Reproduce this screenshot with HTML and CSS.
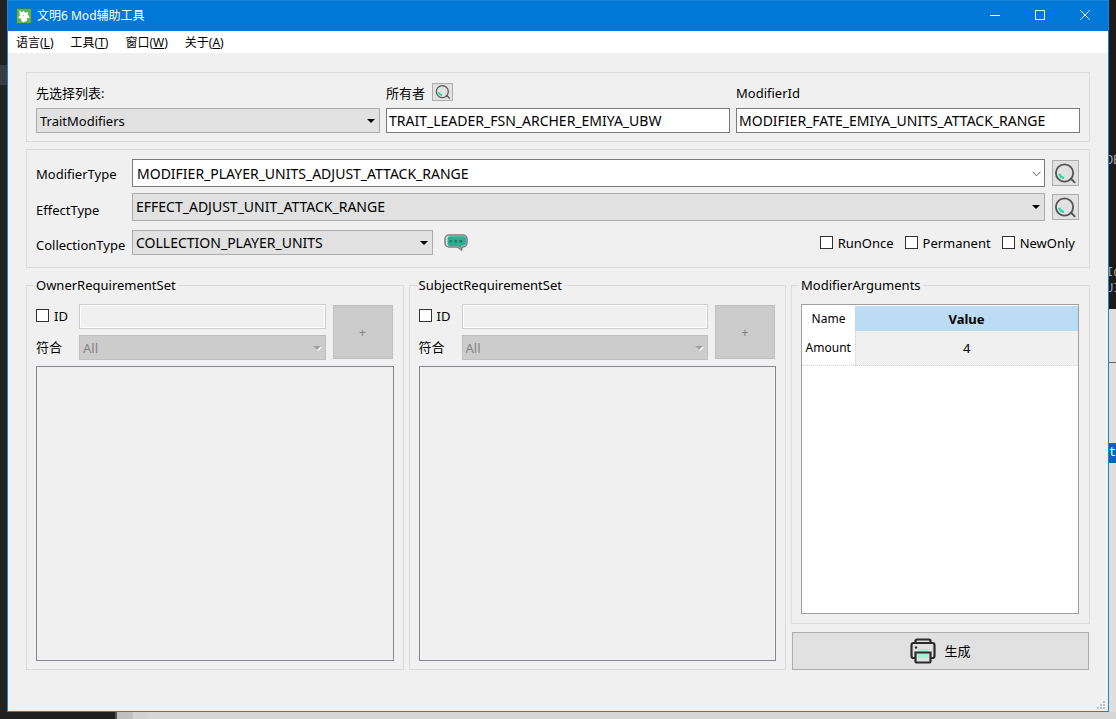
FILE: index.html
```
<!DOCTYPE html>
<html lang="zh-CN">
<head>
<meta charset="utf-8">
<title>文明6 Mod辅助工具</title>
<link rel="stylesheet" href="styles.css">
</head>
<body>
<svg class="defs" width="0" height="0" aria-hidden="true">
  <symbol id="search" viewBox="0 0 24 24">
    <circle cx="11" cy="11.500" r="9" fill="none" stroke="#555" stroke-width="1.900"/>
    <path d="M16.500 18.500l1.500-1 4 4.300" stroke="#555" stroke-width="2" fill="none"/>
    <path d="M5.500 12.300a5.600 5.600 0 0 0 5 4.300" stroke="#1fdca5" stroke-width="2.300" fill="none"/>
  </symbol>
</svg>
<div class="desktop">
  <div class="edge-left"></div>
  <div class="window">
    <header class="titlebar">
      <svg class="app-icon" viewBox="0 0 16 16" aria-hidden="true">
        <rect x=".5" y=".5" width="15" height="15" rx="1" fill="#59b365" stroke="#2b7d6c"/>
        <path d="M3.500 2l2.500 2.500 1.500-2 1.500 2.300 3-.8-.2 2.500 2 3.200-3 .5.300 2.300-3.600 1.800-2.300-1 .3-2L2 9.500l1.800-1.800z" fill="#fff"/>
        <path d="M6.500 7l1.500 1" stroke="#8ac994" fill="none"/>
      </svg>
      <h1 class="title">文明6 Mod辅助工具</h1>
      <div class="controls">
        <button class="control" aria-label="最小化"><svg viewBox="0 0 10 10"><path d="M0 5.500h10"/></svg></button>
        <button class="control" aria-label="最大化"><svg viewBox="0 0 10 10"><path d="M.5.500h9v9h-9z"/></svg></button>
        <button class="control" aria-label="关闭"><svg viewBox="0 0 10 10"><path d="M.3.300l9.400 9.400M9.700.300L.3 9.700"/></svg></button>
      </div>
    </header>
    <nav class="menu">
      <button class="menu-item">语言(<u>L</u>)</button>
      <button class="menu-item">工具(<u>T</u>)</button>
      <button class="menu-item">窗口(<u>W</u>)</button>
      <button class="menu-item">关于(<u>A</u>)</button>
    </nav>
    <main class="content">
      <section class="panel source">
        <div class="field">
          <div class="field-head"><label for="list">先选择列表:</label></div>
          <span class="combo"><select id="list"><option>TraitModifiers</option></select></span>
        </div>
        <div class="field">
          <div class="field-head"><label for="owner">所有者</label>
            <button class="tool small" aria-label="搜索所有者"><svg><use href="#search"/></svg></button></div>
          <input class="text code-name" id="owner" value="TRAIT_LEADER_FSN_ARCHER_EMIYA_UBW">
        </div>
        <div class="field">
          <div class="field-head"><label for="modifier-id">ModifierId</label></div>
          <input class="text code-name" id="modifier-id" value="MODIFIER_FATE_EMIYA_UNITS_ATTACK_RANGE">
        </div>
      </section>

      <section class="panel types">
        <div class="type-row">
          <label for="modifier-type">ModifierType</label>
          <span class="combo editable"><input class="text code-name" id="modifier-type" value="MODIFIER_PLAYER_UNITS_ADJUST_ATTACK_RANGE"><svg class="chevron" viewBox="0 0 9 6" aria-hidden="true"><path d="M.5.800l4 4 4-4"/></svg></span>
          <button class="tool" aria-label="搜索 ModifierType"><svg><use href="#search"/></svg></button>
        </div>
        <div class="type-row">
          <label for="effect-type">EffectType</label>
          <span class="combo"><select class="code-name" id="effect-type"><option>EFFECT_ADJUST_UNIT_ATTACK_RANGE</option></select></span>
          <button class="tool" aria-label="搜索 EffectType"><svg><use href="#search"/></svg></button>
        </div>
        <div class="type-row collection">
          <label for="collection-type">CollectionType</label>
          <span class="combo"><select class="code-name" id="collection-type"><option>COLLECTION_PLAYER_UNITS</option></select></span>
          <button class="comment" aria-label="注释"><svg viewBox="0 0 24 17">
            <path d="M5 1h14a4 4 0 0 1 4 4v4a4 4 0 0 1-4 4h-1l-.5 3-4-3H5a4 4 0 0 1-4-4V5a4 4 0 0 1 4-4z" fill="#d8e8e4" stroke="#7b7b7b" stroke-width="1.500"/>
            <path d="M6 2.300h13.500a2.500 2.500 0 0 1 2.500 2.500v4a3 3 0 0 1-3 3h-2v2.500L13.500 12H6a2.500 2.500 0 0 1-2.500-2.500V5A2.600 2.600 0 0 1 6 2.300z" fill="#26b094"/>
            <path d="M5.500 6h2.500v2.500H5.500zM10.500 6H13v2.500h-2.500zM15.500 6H18v2.500h-2.500z" fill="#4e6460"/>
          </svg></button>
          <div class="flags">
            <label class="check"><input type="checkbox">RunOnce</label>
            <label class="check"><input type="checkbox">Permanent</label>
            <label class="check"><input type="checkbox">NewOnly</label>
          </div>
        </div>
      </section>

      <div class="groups">
        <fieldset class="group">
          <legend>OwnerRequirementSet</legend>
          <div class="group-body">
            <div class="requirement">
              <label class="check"><input type="checkbox">ID</label>
              <input class="text" aria-label="Owner ID" disabled>
              <label for="owner-match">符合</label>
              <span class="combo off"><select id="owner-match" disabled><option>All</option></select></span>
              <button class="add" disabled>+</button>
            </div>
            <div class="tree"></div>
          </div>
        </fieldset>
        <fieldset class="group">
          <legend>SubjectRequirementSet</legend>
          <div class="group-body">
            <div class="requirement">
              <label class="check"><input type="checkbox">ID</label>
              <input class="text" aria-label="Subject ID" disabled>
              <label for="subject-match">符合</label>
              <span class="combo off"><select id="subject-match" disabled><option>All</option></select></span>
              <button class="add" disabled>+</button>
            </div>
            <div class="tree"></div>
          </div>
        </fieldset>
        <div class="side">
          <fieldset class="group">
            <legend>ModifierArguments</legend>
            <div class="group-body">
              <div class="table-box">
                <table class="arguments">
                  <thead><tr><th class="name">Name</th><th class="value">Value</th></tr></thead>
                  <tbody><tr><td class="name">Amount</td><td class="value">4</td></tr></tbody>
                </table>
              </div>
            </div>
          </fieldset>
          <button class="generate">
            <svg viewBox="0 0 26 26" aria-hidden="true">
              <path d="M8 11h10v9H8z" fill="#a8efd2"/>
              <path d="M5.500 20H3.500A2 2 0 0 1 1.500 18V7a2 2 0 0 1 2-2h19a2 2 0 0 1 2 2v11a2 2 0 0 1-2 2h-2M5.500 5V3a1.500 1.500 0 0 1 1.500-1.500h12A1.500 1.500 0 0 1 20.500 3v2M5.500 14.500h15V23a1.500 1.500 0 0 1-1.500 1.500H7A1.500 1.500 0 0 1 5.500 23z" fill="none" stroke="#2b2b2b" stroke-width="2.200"/>
              <circle cx="6" cy="9.500" r="1.200" fill="#2b2b2b"/>
            </svg>生成
          </button>
        </div>
      </div>
    </main>
    <svg class="grip" viewBox="0 0 8 8" aria-hidden="true"><path d="M6 0h2v2H6zM3 3h2v2H3zM6 3h2v2H6zM0 6h2v2H0zM3 6h2v2H3zM6 6h2v2H6z" fill="#bdbdbd"/></svg>
  </div>
  <div class="edge-right">
    <div class="code"><span>DE</span><span>Id</span><span>UI</span></div>
    <div class="pale"><span class="selection">t</span></div>
  </div>
  <div class="edge-bottom"></div>
</div>
</body>
</html>
```
FILE: styles.css
```
* { box-sizing: border-box; }

body {
  margin: 0;
  font: 13px/20px "Noto Sans", "Noto Sans CJK SC", sans-serif;
  color: #000;
}

button, input, select { margin: 0; font: inherit; color: inherit; border-radius: 0; }
.defs { position: absolute; }

.desktop {
  display: grid;
  grid-template-columns: 7px minmax(0, 1fr) 7px;
  grid-template-rows: minmax(0, 1fr) 7px;
  min-height: 100vh;
  background: #222;
}
.edge-left { background: linear-gradient(#222 65px, #3b3b42 65px 85px, #222 85px); }
.edge-bottom {
  grid-column: 1 / -1;
  background: linear-gradient(90deg, #202020 115px, #555 115px 117px, #c0c0c0 117px 133px, #d2d2d2 133px 147px, #d6d6d6 147px);
}
.edge-right {
  display: flex;
  flex-direction: column;
  overflow: hidden;
  font: 12px/16px "Liberation Mono", monospace;
  color: #aaa;
}
.code {
  display: grid;
  grid-template-rows: 112px 16px;
  align-content: start;
  height: 309px;
  padding-top: 153px;
  background: #1b1b1b;
}
.code span { margin-left: -3px; }
.pale {
  flex: 1;
  padding-top: 134px;
  background: linear-gradient(#dedede 53px, #666 53px 54px, #dedede 54px);
}
.selection { display: block; line-height: 20px; background: #0067c0; color: #fff; }

.window {
  position: relative;
  display: flex;
  flex-direction: column;
  border: 1px solid #1883d7;
  border-top: 0;
  background: #f0f0f0;
}

.titlebar {
  display: flex;
  align-items: center;
  height: 31px;
  padding-left: 8px;
  border-top: 1px solid #1883d7;
  background: #0078d7;
  color: #fff;
}
.app-icon { width: 16px; height: 16px; }
.title { margin: 0 0 0 5px; font-size: 12px; font-weight: 400; }
.controls { display: flex; align-self: stretch; margin: 0 1px 2px auto; }
.control { width: 45px; padding: 0; border: 0; background: none; }
.control svg { display: block; width: 10px; height: 10px; margin: 0 auto; fill: none; stroke: #fff; }

.menu { display: flex; gap: 17px; height: 22px; padding: 2px 8px 0; background: #fff; }
.menu-item { padding: 0; border: 0; background: none; font-size: 12px; }

.content { flex: 1; display: flex; flex-direction: column; gap: 7px; padding: 19px 18px 41px; }
.panel { padding: 9px; border: 1px solid #dcdcdc; }

.source { display: grid; grid-template-columns: repeat(3, minmax(0, 1fr)); gap: 6px; padding-bottom: 8px; }
.field-head { display: flex; align-items: center; gap: 7px; height: 20px; margin-bottom: 6px; }
.field-head label { padding-top: 2px; }

.text {
  display: block;
  width: 100%;
  min-width: 0;
  height: 25px;
  padding: 0 2px;
  border: 1px solid #7a7a7a;
  background: #fff;
}
.code-name { font-size: 14px; }
.text:disabled { border-color: #ccc; background: #f0f0f0; box-shadow: inset 0 0 0 1px #fff; }

.combo { position: relative; display: block; height: 25px; }
.combo select {
  appearance: none;
  display: block;
  width: 100%;
  height: 100%;
  padding: 0 20px 0 3px;
  border: 1px solid #adadad;
  background: #e1e1e1;
  opacity: 1;
}
.combo:not(.editable)::after {
  content: "";
  position: absolute;
  top: 50%;
  right: 5px;
  margin-top: -2px;
  border: 4px solid transparent;
  border-top-color: #000;
  border-bottom: 0;
  pointer-events: none;
}
.combo.off select { border-color: #bfbfbf; background: #ccc; color: #838383; }
.combo.off::after { border-top-color: #a0a0a0; filter: drop-shadow(1px 1px 0 #fff); }
.editable .text { height: 100%; padding-left: 4px; }
.chevron { position: absolute; top: 12px; right: 4px; width: 9px; height: 6px; fill: none; stroke: #555; }

.tool { width: 27px; height: 26px; padding: 0; border: 1px solid #adadad; background: #e1e1e1; }
.tool svg { display: block; width: 23px; height: 23px; margin: auto; }
.tool.small { width: 21px; height: 18px; }
.tool.small svg { width: 16px; height: 16px; }

.types { display: grid; gap: 6px; padding: 9px 10px 12px 9px; }
.type-row {
  display: grid;
  grid-template-columns: 90px minmax(0, 1fr) 28px;
  column-gap: 6px;
  align-items: center;
  white-space: nowrap;
}
.type-row .combo { height: 28px; }
.type-row .tool { justify-self: end; }
.type-row > label { padding-top: 2px; }
.type-row:nth-child(2) > label { padding-top: 6px; }
.collection > label:first-child { padding-top: 4px; }
.collection { grid-template-columns: 90px 301px 24px minmax(0, 1fr); margin-top: 3px; }
.collection .combo { height: 25px; }
.comment { width: 24px; height: 17px; margin-left: 5px; padding: 0; border: 0; background: none; }
.comment svg { display: block; width: 24px; height: 17px; }
.flags { display: flex; justify-content: flex-end; gap: 11px; padding-right: 4px; }

.check { display: flex; align-items: center; gap: 5px; }
.check input { appearance: none; width: 13px; height: 13px; border: 1px solid #333; background: #fff; }
.check input:checked { background: #0078d7; }

.groups {
  flex: 1;
  display: grid;
  grid-template-columns: minmax(0, 1fr) minmax(0, 1fr) 299px;
  gap: 5px;
}
.group {
  display: flex;
  flex-direction: column;
  min-width: 0;
  margin: 0;
  padding: 0 9px 8px;
  border: 1px solid #dcdcdc;
}
.group legend { margin-left: -2px; padding: 0 2px; line-height: 20px; }
.group-body { flex: 1; display: flex; flex-direction: column; gap: 6px; min-height: 0; padding-top: 9px; }
.requirement {
  display: grid;
  grid-template-columns: 36px minmax(0, 1fr) 60px;
  gap: 6px 7px;
  align-items: center;
  padding-right: 1px;
}
.requirement label { padding-bottom: 2px; }
.add {
  grid-column: 3;
  grid-row: 1 / 3;
  height: 54px;
  padding: 2px 0 0;
  border: 1px solid #bfbfbf;
  background: #ccc;
  color: #838383;
  font-size: 12px;
}
.tree { flex: 1; border: 1px solid #828790; }

.side { display: flex; flex-direction: column; gap: 8px; }
.side .group { flex: 1; }
.side .group-body { padding-bottom: 1px; }
.table-box { flex: 1; margin-right: 1px; padding-top: 1px; border: 1px solid #a0a0a0; background: #fff; }
.arguments { width: 100%; border-collapse: collapse; text-align: center; }
.arguments th, .arguments td { padding: 0; }
.arguments th { height: 25px; }
.arguments td { height: 34px; border-bottom: 1px dotted #d0d0d0; }
.arguments .name { width: 53px; font-size: 12px; font-weight: 400; }
.arguments td.value { border-left: 1px dotted #d0d0d0; background: #f0f0f0; }
.arguments th.value { background: #bcdcf4; }
.generate {
  display: flex;
  align-items: center;
  justify-content: center;
  gap: 8px;
  height: 38px;
  margin: 0 1px;
  border: 1px solid #adadad;
  background: #e1e1e1;
}
.generate svg { width: 26px; height: 26px; }
.grip { position: absolute; right: 3px; bottom: 2px; width: 8px; height: 8px; }
```
